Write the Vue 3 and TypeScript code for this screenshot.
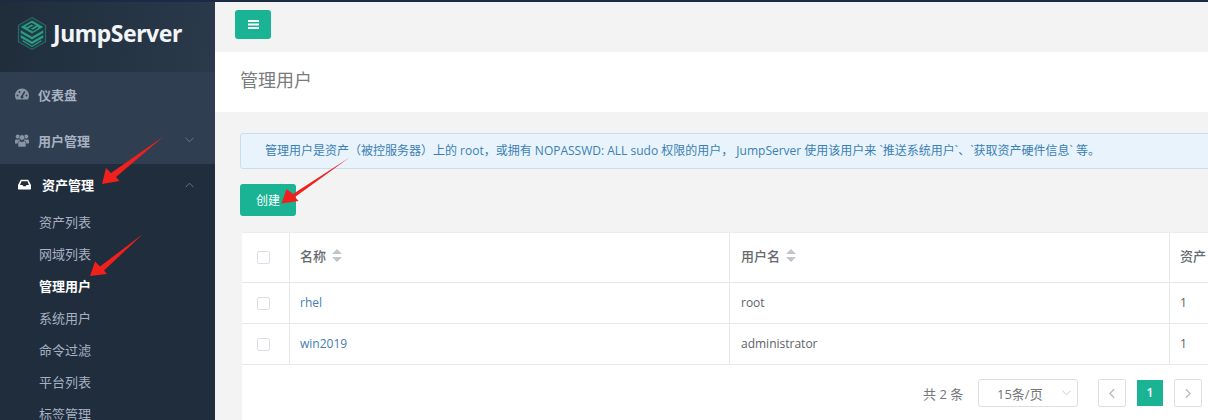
<script setup lang="ts">
const subMenu = [
  { label: '资产列表', active: false },
  { label: '网域列表', active: false },
  { label: '管理用户', active: true },
  { label: '系统用户', active: false },
  { label: '命令过滤', active: false },
  { label: '平台列表', active: false },
  { label: '标签管理', active: false },
]

const rows = [
  { name: 'rhel', user: 'root', assets: 1 },
  { name: 'win2019', user: 'administrator', assets: 1 },
]
</script>

<template>
  <div class="page">
    <aside class="sidebar">
      <div class="brand">
        <svg class="logo" viewBox="0 0 32 36" width="30" height="35">
          <path d="M16 1 30.500 9.300V26.700L16 35 1.500 26.700V9.300Z" fill="#1e3a46" stroke="#2a6a66" stroke-width="1.200" />
          <path d="M16 4 28 11 16 18 4 11Z" fill="#2d9a80" />
          <path d="M9.500 11 15.500 7.500 19 9.500 13 13 17 15 22.500 11.500" fill="none" stroke="#1e3a46" stroke-width="1.500" />
          <path d="M4 14.500 16 21.500 28 14.500V17.500L16 24.500 4 17.500Z" fill="#2d9a80" />
          <path d="M4 19.500 16 26.500 28 19.500V22.500L16 29.500 4 22.500Z" fill="#2d9a80" />
          <path d="M6 25 16 31 26 25V26.500L16 32.500 6 26.500Z" fill="#2d9a80" />
        </svg>
        <span class="brand-name">JumpServer</span>
      </div>

      <nav class="nav-light">
        <a class="nav-item">
          <svg class="nav-icon" viewBox="0 0 14 12" width="14" height="12">
            <path d="M7 .500A7 7 0 0 0 0 7.500C0 9 .5 10.400 1.200 11.500H12.800C13.500 10.400 14 9 14 7.500A7 7 0 0 0 7 .500Z" fill="#8a95a3" />
            <path d="M6.800 8.500 9.800 3.500" stroke="#2f3f51" stroke-width="1.500" />
            <circle cx="2.500" cy="7.500" r="1" fill="#2f3f51" /><circle cx="4.500" cy="4" r="1" fill="#2f3f51" /><circle cx="11.500" cy="7.500" r="1" fill="#2f3f51" />
            <circle cx="7" cy="9" r="1.500" fill="#2f3f51" />
          </svg>
          <span>仪表盘</span>
        </a>
        <a class="nav-item">
          <svg class="nav-icon" viewBox="0 0 14 13" width="14" height="13">
            <circle cx="2.800" cy="2.600" r="2.100" fill="#8a95a3" /><circle cx="11.200" cy="2.600" r="2.100" fill="#8a95a3" />
            <path d="M0 9.500V7Q0 5.300 1.300 5.200Q2.800 6.300 4.300 5.200H5V9.500ZM9 5.200H9.700Q11.200 6.300 12.700 5.200Q14 5.300 14 7V9.500H9Z" fill="#8a95a3" />
            <circle cx="7" cy="3.500" r="2.800" fill="#8a95a3" stroke="#2f3f51" stroke-width=".6" />
            <path d="M3 13V9.500Q3 7 4.800 6.900Q7 8.500 9.200 6.900Q11 7 11 9.500V13Z" fill="#8a95a3" stroke="#2f3f51" stroke-width=".6" />
          </svg>
          <span>用户管理</span>
          <svg class="chevron" viewBox="0 0 10 6" width="9" height="6"><path d="M.5.500 5 5 9.500.500" /></svg>
        </a>
      </nav>

      <nav class="nav-active">
        <a class="nav-head">
          <svg class="nav-icon" viewBox="0 0 14 11" width="13" height="11">
            <path d="M3 .500H11L14 6V10Q14 11 13 11H1Q0 11 0 10V6ZM3.800 2 2.200 6H4.800L5.600 7.500H8.400L9.200 6H11.800L10.200 2Z" fill="#ffffff" fill-rule="evenodd" />
          </svg>
          <span>资产管理</span>
          <svg class="chevron" viewBox="0 0 10 6" width="9" height="6"><path d="M.5 5.500 5 1 9.500 5.500" /></svg>
        </a>
        <a v-for="item in subMenu" :key="item.label" class="sub-item" :class="{ current: item.active }">{{ item.label }}</a>
      </nav>
    </aside>

    <main class="main">
      <header class="topbar">
        <button class="toggle">
          <svg viewBox="0 0 11 9" width="11" height="9"><path d="M0 0H11V2H0ZM0 3.500H11V5.500H0ZM0 7H11V9H0Z" fill="#fff" /></svg>
        </button>
      </header>
      <div class="heading"><h2>管理用户</h2></div>

      <section class="content">
        <div class="alert">管理用户是资产（被控服务器）上的 root，或拥有 NOPASSWD: ALL sudo 权限的用户， JumpServer 使用该用户来 `推送系统用户`、`获取资产硬件信息` 等。</div>
        <button class="create">创建</button>

        <div class="panel">
          <div class="row head">
            <div class="cell check"><i class="box"></i></div>
            <div class="cell"><b>名称</b><span class="sort"></span></div>
            <div class="cell wide"><b>用户名</b><span class="sort"></span></div>
            <div class="cell"><b>资产</b></div>
          </div>
          <div v-for="row in rows" :key="row.name" class="row">
            <div class="cell check"><i class="box"></i></div>
            <div class="cell"><a class="link">{{ row.name }}</a></div>
            <div class="cell wide">{{ row.user }}</div>
            <div class="cell">{{ row.assets }}</div>
          </div>
          <div class="pager">
            <span class="total">共 2 条</span>
            <div class="size">
              <span>15条/页</span>
              <svg viewBox="0 0 10 6" width="9" height="6"><path d="M.5.500 5 5 9.500.500" /></svg>
            </div>
            <button class="page-btn">
              <svg viewBox="0 0 7 12" width="6" height="11"><path d="M6 1 1 6 6 11" /></svg>
            </button>
            <span class="page-num">1</span>
            <button class="page-btn">
              <svg viewBox="0 0 7 12" width="6" height="11"><path d="M1 1 6 6 1 11" /></svg>
            </button>
          </div>
        </div>
      </section>
    </main>

    <!-- red annotation arrows drawn over the screenshot -->
    <svg class="arrows" viewBox="0 0 1208 420" width="1208" height="420">
      <path d="M163.500 136.500 116 177 119.500 181 102 184 106 168 111 173Z" />
      <path d="M143.500 233.500 104 270.500 107 274 90 276 95 261.500 100 266.500Z" />
      <path d="M349.500 157.500 295 197 298.500 201 281.500 203.500 286.500 189 293 194Z" />
    </svg>
  </div>
</template>

<style>
html,
body {
  margin: 0;
  background: #f3f3f4;
}
</style>

<style scoped>
.page {
  position: relative;
  display: flex;
  width: 1208px;
  height: 420px;
  overflow: hidden;
  font-family: "Open Sans", "Noto Sans CJK SC", sans-serif;
  font-size: 12px;
  color: #676a6c;
  background: #f3f3f4;
  border-top: 2px solid #1c2b45;
  box-sizing: border-box;
}

.sidebar {
  flex: 0 0 215px;
  background: #1f2d3d;
  overflow: hidden;
}

.brand {
  display: flex;
  align-items: center;
  gap: 6px;
  height: 70px;
  padding: 0 0 8px 17px;
  box-sizing: border-box;
  background: linear-gradient(100deg, #1f2d3b, #2a3a4b);
}

.brand-name {
  font-family: "Noto Sans", sans-serif;
  font-size: 23px;
  font-weight: 700;
  letter-spacing: -0.45px;
  color: #f2f5f7;
}

.nav-light {
  background: #2f3f51;
}

.nav-item,
.nav-head {
  display: flex;
  align-items: center;
  font-size: 13px;
  font-weight: 600;
  color: #a7b1c2;
}

.nav-item {
  height: 46px;
  padding: 0 0 2px 15px;
  box-sizing: border-box;
}

.nav-item .nav-icon {
  margin-right: 9px;
}

.nav-head {
  height: 43px;
  padding: 0 0 2px 18px;
  box-sizing: border-box;
  color: #ffffff;
}

.nav-head .nav-icon {
  margin-right: 11px;
}

.chevron {
  margin-left: auto;
  margin-right: 21px;
  fill: none;
  stroke: #6d7a8a;
  stroke-width: 1;
}

.sub-item {
  display: block;
  height: 32px;
  line-height: 31px;
  padding-left: 39px;
  font-size: 13px;
  color: #a7b1c2;
}

.sub-item.current {
  font-weight: 700;
  color: #ffffff;
}

.main {
  flex: 1;
  min-width: 0;
}

.topbar {
  height: 50px;
  padding: 8px 0 0 20px;
  box-sizing: border-box;
  background: #f3f3f4;
}

.toggle {
  display: flex;
  align-items: center;
  justify-content: center;
  width: 36px;
  height: 29px;
  padding: 0;
  border: 0;
  border-radius: 3px;
  background: #1ab394;
}

.heading {
  height: 60px;
  padding-left: 25px;
  background: #ffffff;
}

.heading h2 {
  margin: 0;
  padding-top: 16px;
  font-size: 18px;
  font-weight: 400;
  line-height: 25px;
  color: #797b7d;
}

.content {
  padding: 21px 0 0 25px;
}

.alert {
  width: 1000px;
  height: 36px;
  padding-left: 24px;
  box-sizing: border-box;
  line-height: 34px;
  color: #3b7fb4;
  white-space: nowrap;
  background: #e8f3fb;
  border: 1px solid #c5e0ee;
  border-radius: 3px;
}

.create {
  display: block;
  width: 56px;
  height: 32px;
  margin-top: 15px;
  padding: 0;
  border: 0;
  border-radius: 3px;
  font: inherit;
  color: #ffffff;
  background: #1ab394;
}

.panel {
  width: 1000px;
  margin: 16px 0 0 2px;
  background: #ffffff;
}

.row {
  display: grid;
  grid-template-columns: 47px 440px 440px 1fr;
  height: 41px;
  border-bottom: 1px solid #e7e7e9;
  box-sizing: border-box;
}

.row.head {
  height: 51px;
  border-top: 1px solid #ececee;
}

.cell {
  display: flex;
  align-items: center;
  padding: 0 0 2px 10px;
  color: #606266;
  border-left: 1px solid #e7e7e9;
}

.cell.wide {
  padding-left: 11px;
}

.row.head .cell {
  padding-bottom: 4px;
}

.cell.check,
.row.head .cell.check {
  padding: 0 0 0 15px;
  border-left: 0;
}

.cell b {
  font-size: 13px;
  font-weight: 500;
  color: #666a6e;
}

.box {
  width: 11px;
  height: 11px;
  border: 1px solid #dcdfe6;
  border-radius: 2px;
}

.sort {
  position: relative;
  width: 11px;
  height: 13px;
  margin-left: 6px;
}

.sort::before,
.sort::after {
  content: "";
  position: absolute;
  left: 0;
  border: 5px solid transparent;
  border-left-width: 5.500px;
  border-right-width: 5.500px;
}

.sort::before {
  top: 0;
  border-top: 0;
  border-bottom-color: #c0c4cc;
}

.sort::after {
  bottom: 0;
  border-bottom: 0;
  border-top-color: #c0c4cc;
}

.link {
  color: #3f7cb5;
}

.pager {
  display: flex;
  align-items: center;
  height: 56px;
  padding-left: 681px;
  font-size: 13px;
}

.total {
  width: 55px;
  color: #74777c;
}

.size {
  display: flex;
  align-items: center;
  justify-content: space-between;
  width: 100px;
  height: 28px;
  margin-right: 20px;
  padding: 0 6px 0 18px;
  box-sizing: border-box;
  border: 1px solid #dcdfe6;
  border-radius: 3px;
  color: #74777c;
}

.size svg {
  fill: none;
  stroke: #c0c4cc;
}

.page-btn {
  display: flex;
  align-items: center;
  justify-content: center;
  width: 28px;
  height: 28px;
  padding: 0;
  border: 1px solid #dcdfe6;
  border-radius: 2px;
  background: #ffffff;
}

.page-btn svg {
  fill: none;
  stroke: #b5b9c0;
  stroke-width: 1.500;
}

.page-num {
  width: 26px;
  height: 26px;
  margin: 0 11px;
  line-height: 26px;
  text-align: center;
  font-size: 12px;
  font-weight: 600;
  color: #ffffff;
  background: #1ab394;
}

.arrows {
  position: absolute;
  top: -2px;
  left: 0;
  fill: #f0201c;
  pointer-events: none;
}
</style>
